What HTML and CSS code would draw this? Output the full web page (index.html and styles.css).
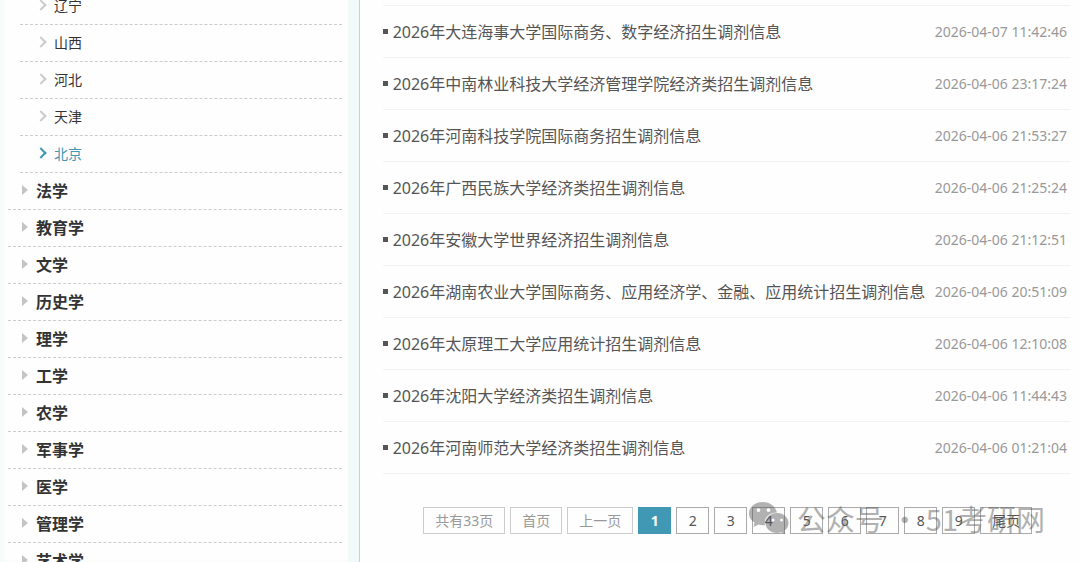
FILE: index.html
```
<!DOCTYPE html>
<html lang="zh-CN">
<head>
    <meta charset="UTF-8">
    <meta name="viewport" content="width=device-width, initial-scale=1.0">
    <title>调剂信息</title>
    <link rel="stylesheet" href="styles.css">
</head>
<body>

<div class="page">
    <nav class="sidebar">
        <ul class="region-list">
            <li><a href="#">辽宁</a></li>
            <li><a href="#">山西</a></li>
            <li><a href="#">河北</a></li>
            <li><a href="#">天津</a></li>
            <li><a href="#" class="active">北京</a></li>
        </ul>
        <ul class="subject-list">
            <li><a href="#">法学</a></li>
            <li><a href="#">教育学</a></li>
            <li><a href="#">文学</a></li>
            <li><a href="#">历史学</a></li>
            <li><a href="#">理学</a></li>
            <li><a href="#">工学</a></li>
            <li><a href="#">农学</a></li>
            <li><a href="#">军事学</a></li>
            <li><a href="#">医学</a></li>
            <li><a href="#">管理学</a></li>
            <li><a href="#">艺术学</a></li>
        </ul>
    </nav>

    <main class="content">
        <ul class="news-list">
            <li><a href="#">2026年大连海事大学国际商务、数字经济招生调剂信息</a><time>2026-04-07 11:42:46</time></li>
            <li><a href="#">2026年中南林业科技大学经济管理学院经济类招生调剂信息</a><time>2026-04-06 23:17:24</time></li>
            <li><a href="#">2026年河南科技学院国际商务招生调剂信息</a><time>2026-04-06 21:53:27</time></li>
            <li><a href="#">2026年广西民族大学经济类招生调剂信息</a><time>2026-04-06 21:25:24</time></li>
            <li><a href="#">2026年安徽大学世界经济招生调剂信息</a><time>2026-04-06 21:12:51</time></li>
            <li><a href="#">2026年湖南农业大学国际商务、应用经济学、金融、应用统计招生调剂信息</a><time>2026-04-06 20:51:09</time></li>
            <li><a href="#">2026年太原理工大学应用统计招生调剂信息</a><time>2026-04-06 12:10:08</time></li>
            <li><a href="#">2026年沈阳大学经济类招生调剂信息</a><time>2026-04-06 11:44:43</time></li>
            <li><a href="#">2026年河南师范大学经济类招生调剂信息</a><time>2026-04-06 01:21:04</time></li>
        </ul>

        <div class="pagination">
            <span class="disabled">共有33页</span>
            <span class="disabled">首页</span>
            <span class="disabled">上一页</span>
            <span class="current">1</span>
            <a href="#">2</a>
            <a href="#">3</a>
            <a href="#">4</a>
            <a href="#">5</a>
            <a href="#">6</a>
            <a href="#">7</a>
            <a href="#">8</a>
            <a href="#">9</a>
            <a href="#">尾页</a>
        </div>
    </main>

    <div class="watermark">
        <svg width="40" height="34" viewBox="0 0 40 34" aria-hidden="true">
            <path fill-rule="evenodd" d="M14 1C6 1 0 6 0 12.500c0 4 2 7 5.500 9L4.500 26l5-2.500c2 .6 4.500.9 6.500.7C14.500 17 20 11.500 28 11.500 26.500 5.500 21 1 14 1zM9.500 7.200a1.900 1.900 0 1 1 0 3.800 1.900 1.900 0 0 1 0-3.800zm10 0a1.900 1.900 0 1 1 0 3.800 1.900 1.900 0 0 1 0-3.800z"/>
            <path fill-rule="evenodd" d="M28 12c-6.500 0-11.500 4.500-11.500 10S21.500 32 28 32c1.500 0 3-.2 4.300-.7l4.200 2.200-1.200-3.700c2.700-1.800 4.200-4.600 4.200-7.800 0-5.500-5-10-11.500-10zm-4 5.500a1.500 1.500 0 1 1 0 3 1.500 1.500 0 0 1 0-3zm8.500 0a1.500 1.500 0 1 1 0 3 1.500 1.500 0 0 1 0-3z"/>
        </svg>
        <span>公众号 · 51考研网</span>
    </div>
</div>

</body>
</html>
```
FILE: styles.css
```
* {
    box-sizing: border-box;
}
body {
    margin: 0;
    font-family: "Noto Sans", "Noto Sans CJK SC", sans-serif;
    font-size: 14px;
    color: #333;
    background: #fefefe;
}
ul {
    list-style: none;
    margin: 0;
    padding: 0;
}
a {
    color: inherit;
    text-decoration: none;
}
.page {
    position: relative;
    display: flex;
    height: 100vh;
    overflow: hidden;
}

/* left menu */
.sidebar {
    flex: 0 0 33.3%;
    margin-top: -12px;
    padding: 0 6px 0 8px;
    border-right: 1px solid #c8d4d4;
    box-shadow: inset -11px 0 0 #f2faf9, inset 4px 0 4px #f6fbfa;
}
.sidebar ul {
    margin-right: 11px;
}
.sidebar .region-list {
    margin-left: 12px;
}
.sidebar li {
    border-bottom: 1px dashed #ccc;
}
.sidebar a {
    display: flex;
    align-items: center;
    height: 36px;
    padding-bottom: 2px;
}
.region-list a {
    padding-left: 17px;
}
.region-list a::before {
    content: "";
    width: 6px;
    height: 6px;
    margin-right: 9px;
    border: solid #ccc;
    border-width: 2px 2px 0 0;
    transform: rotate(45deg);
}
.region-list .active {
    color: #4098b5;
}
.region-list .active::before {
    border-color: #4098b5;
}
.subject-list a {
    padding-left: 14px;
    font-size: 16px;
    font-weight: bold;
}
.subject-list a::before {
    content: "";
    margin-right: 8px;
    border: solid transparent;
    border-width: 5px 0 5px 6px;
    border-left-color: #c4c4c4;
}

/* news */
.content {
    flex: 1;
    min-width: 0;
    padding: 5px 10px 0 23px;
}
.news-list {
    border-top: 1px solid #f2f2f2;
}
.news-list li {
    display: flex;
    align-items: center;
    height: 52px;
    padding: 0 3px 1px 0;
    border-bottom: 1px solid #f2f2f2;
    white-space: nowrap;
}
.news-list li::before {
    content: "";
    width: 5px;
    height: 5px;
    margin-right: 5px;
    background: #555;
}
.news-list a {
    flex: 1;
    font-size: 16px;
    color: #555;
}
.news-list time {
    color: #999;
}

/* pages */
.pagination {
    display: flex;
    justify-content: center;
    gap: 5px;
    margin-top: 33px;
    padding-left: 3px;
}
.pagination a,
.pagination span {
    min-width: 33px;
    padding: 0 11px;
    border: 1px solid #aaa;
    line-height: 25px;
    text-align: center;
    color: #555;
    white-space: nowrap;
}
.pagination .disabled {
    border-color: #ccc;
    color: #999;
}
.pagination .current {
    border-color: #4098b5;
    background: #4098b5;
    color: #fff;
    font-weight: bold;
}

.watermark {
    position: absolute;
    right: 35px;
    bottom: 23px;
    display: flex;
    align-items: center;
    gap: 8px;
    font-family: "Noto Sans CJK SC", sans-serif;
    font-size: 29px;
    line-height: 42px;
    color: #555;
    opacity: 0.45;
    white-space: pre;
}
.watermark svg {
    fill: #555;
}
```
